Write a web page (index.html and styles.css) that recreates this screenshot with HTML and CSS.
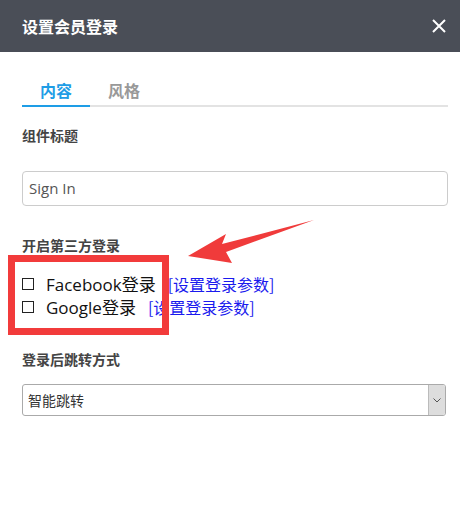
FILE: index.html
```html
<!DOCTYPE html>
<html>
<head>
<meta charset="utf-8">
<link rel="stylesheet" href="styles.css">
</head>
<body>
<div class="dialog">
  <div class="header">
    <span class="title">设置会员登录</span>
    <span class="close">
      <svg width="14" height="14" viewBox="0 0 14 14"><path d="M1 1L13 13M13 1L1 13" stroke="#fff" stroke-width="2"/></svg>
    </span>
  </div>
  <div class="body">
    <div class="tabs">
      <div class="tab active">内容</div>
      <div class="tab">风格</div>
    </div>
    <div class="label first">组件标题</div>
    <div class="input">Sign In</div>
    <div class="label">开启第三方登录</div>
    <div class="options">
      <div class="opt"><span class="box"></span><span class="name">Facebook登录</span><a class="link">[设置登录参数]</a></div>
      <div class="opt"><span class="box"></span><span class="name">Google登录</span><a class="link">[设置登录参数]</a></div>
      <div class="redbox"></div>
    </div>
    <div class="label">登录后跳转方式</div>
    <div class="select"><span class="sel-text">智能跳转</span><span class="sel-btn"><svg width="8" height="5" viewBox="0 0 8 5"><path d="M0.5 0.5L4 4L7.5 0.5" stroke="#555" fill="none" stroke-width="1"/></svg></span></div>
  </div>
  <svg class="arrow" width="160" height="60" viewBox="0 0 160 60">
    <polygon points="142,2 50,26 54,16 16,38 60,45 54,34" fill="#f03b3b"/>
  </svg>
</div>
</body>
</html>
```
FILE: styles.css
```css
html, body { margin: 0; padding: 0; background: #fff; }
body { font-family: "Noto Sans CJK SC", "Open Sans", sans-serif; }
.dialog { position: relative; width: 460px; height: 517px; background: #fff; }
.header {
  height: 52px; background: #4a4e57; display: flex; align-items: center;
  justify-content: space-between; padding: 0 14px 0 22px; box-sizing: border-box;
}
.title { color: #fff; font-size: 16px; font-weight: bold; }
.close { display: flex; align-items: center; }
.body { padding: 0 12px 0 22px; }
.tabs { display: flex; margin-top: 24px; border-bottom: 2px solid #e3e3e3; height: 29px; }
.tab {
  width: 68px; text-align: center; font-size: 16px; font-weight: bold; color: #999;
  line-height: 28px; margin-bottom: -2px; border-bottom: 2px solid transparent; height: 29px; box-sizing: content-box;
}
.tab.active { color: #1e9de6; border-bottom-color: #1e9de6; }
.label { font-size: 14px; font-weight: bold; color: #444; line-height: 20px; margin-top: 0; }
.label.first { margin-top: 18px; }
.input {
  margin-top: 26px; height: 35px; box-sizing: border-box; border: 1px solid #ccc; border-radius: 4px;
  font-family: "Open Sans", sans-serif; font-size: 15px; color: #555; line-height: 33px; padding-left: 6px;
  margin-bottom: 29px;
}
.options { position: relative; margin-top: 17px; margin-bottom: 31px; }
.opt { display: flex; align-items: center; height: 23px; font-size: 17px; color: #111; font-family: "Open Sans", "Noto Sans CJK SC", sans-serif; }
.box { width: 10px; height: 10px; border: 1px solid #222; margin-right: 12px; flex: none; }
.name { margin-right: 12px; }
.link { color: #1a1aee; font-size: 16px; font-family: "Noto Sans CJK SC", sans-serif; }
.redbox {
  position: absolute; left: -14px; top: -17px; width: 147px; height: 66px;
  border: 7px solid #f23b3b;
}
.select {
  margin-top: 15px; height: 32px; width: 424px; box-sizing: border-box; border: 1px solid #aaa; border-radius: 3px;
  display: flex; justify-content: space-between; align-items: stretch; overflow: hidden;
}
.sel-text { font-size: 14px; color: #333; line-height: 30px; padding-left: 5px; }
.sel-btn { width: 16px; background: #ddd; border-left: 1px solid #bbb; display: flex; align-items: center; justify-content: center; }
.arrow { position: absolute; left: 172px; top: 218px; }
```
